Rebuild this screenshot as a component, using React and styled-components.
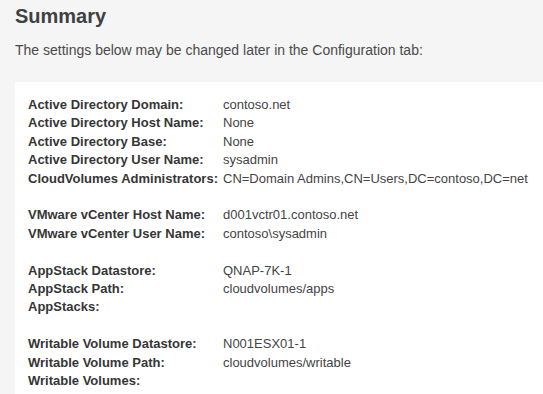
import React from "react";
import styled, { createGlobalStyle } from "styled-components";

const GlobalStyle = createGlobalStyle`
  html, body {
    margin: 0;
    padding: 0;
    background: #f5f5f5;
    overflow: hidden;
  }
`;

const Page = styled.div`
  font-family: "Liberation Sans", Arial, sans-serif;
  padding: 5px 0 0 15px;
  height: 394px;
  box-sizing: border-box;
`;

const Title = styled.h1`
  margin: 0;
  font-size: 20px;
  line-height: 22px;
  font-weight: bold;
  color: #3e4043;
`;

const Intro = styled.p`
  margin: 14px 0 0 0;
  font-size: 14px;
  line-height: 18px;
  color: #4a4a4a;
`;

const Panel = styled.div`
  margin-top: 23px;
  background: #ffffff;
  padding: 14px 0 20px 13px;
  min-height: 320px;
`;

const Group = styled.div`
  display: grid;
  grid-template-columns: 195px 1fr;
  margin-bottom: 18.4px;
`;

const Label = styled.div`
  font-size: 13px;
  line-height: 18.4px;
  font-weight: bold;
  color: #363636;
  white-space: nowrap;
`;

const Value = styled.div`
  font-size: 13px;
  line-height: 18.4px;
  color: #444444;
  white-space: nowrap;
`;

const groups = [
  [
    ["Active Directory Domain:", "contoso.net"],
    ["Active Directory Host Name:", "None"],
    ["Active Directory Base:", "None"],
    ["Active Directory User Name:", "sysadmin"],
    ["CloudVolumes Administrators:", "CN=Domain Admins,CN=Users,DC=contoso,DC=net"],
  ],
  [
    ["VMware vCenter Host Name:", "d001vctr01.contoso.net"],
    ["VMware vCenter User Name:", "contoso\\sysadmin"],
  ],
  [
    ["AppStack Datastore:", "QNAP-7K-1"],
    ["AppStack Path:", "cloudvolumes/apps"],
    ["AppStacks:", ""],
  ],
  [
    ["Writable Volume Datastore:", "N001ESX01-1"],
    ["Writable Volume Path:", "cloudvolumes/writable"],
    ["Writable Volumes:", ""],
  ],
];

export default function App() {
  return (
    <Page>
      <GlobalStyle />
      <Title>Summary</Title>
      <Intro>The settings below may be changed later in the Configuration tab:</Intro>
      <Panel>
        {groups.map((rows, i) => (
          <Group key={i}>
            {rows.map(([label, value]) => (
              <React.Fragment key={label}>
                <Label>{label}</Label>
                <Value>{value}</Value>
              </React.Fragment>
            ))}
          </Group>
        ))}
      </Panel>
    </Page>
  );
}
